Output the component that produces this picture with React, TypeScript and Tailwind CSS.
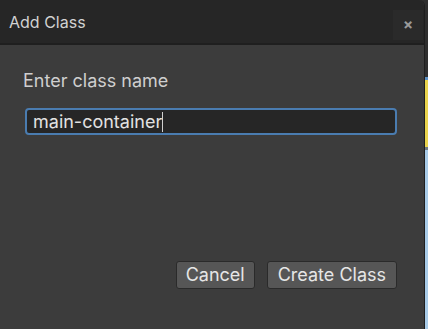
import React from 'react';

const App: React.FC = () => {
  return (
    <div
      className="flex h-[329px] w-[428px] overflow-hidden bg-[#2e2e2e]"
      style={{ fontFamily: 'Inter, "Noto Sans", sans-serif' }}
    >
      <div className="flex w-[425px] flex-col overflow-hidden rounded-tr-[6px] border-r border-[#1e1e1e] bg-[#3c3c3c]">
        <div className="flex h-[45px] shrink-0 items-center justify-between border-b-2 border-[#1f1f1f] bg-[#262626] pl-[9px] pr-[1px]">
          <span className="text-[16px] text-[#d2d2d2]">Add Class</span>
          <button className="mt-[6px] flex h-[30px] w-[30px] items-center justify-center bg-[#2a2a2a] text-[15px] font-bold leading-none text-[#9a9a9a]">
            ×
          </button>
        </div>
        <div className="flex flex-1 flex-col px-[23px] pt-[26px]">
          <label className="text-[18px] leading-[20px] text-[#cfcfcf]">Enter class name</label>
          <div className="ml-[2px] mt-[17px] flex h-[27px] w-[372px] items-center rounded-[4px] border-2 border-[#4a7cb0] bg-[#262626] pl-[6px]">
            <span className="text-[18px] leading-none text-[#e2e2e2]">main-container</span>
            <span className="h-[20px] w-px bg-[#d0d0d0]" />
          </div>
          <div className="mt-[126px] flex justify-end gap-[12px] pr-[4px]">
            <button className="h-[28px] rounded-[3px] border border-[#2a2a2a] bg-[#565656] px-[9px] text-[18px] leading-none text-[#e6e6e6]">
              Cancel
            </button>
            <button className="h-[28px] rounded-[3px] border border-[#2a2a2a] bg-[#565656] px-[10px] text-[18px] leading-none text-[#e6e6e6]">
              Create Class
            </button>
          </div>
        </div>
      </div>
      <div className="flex w-[3px] flex-col">
        <div className="h-[77px] bg-[#2e2e2e]" />
        <div className="h-[3px] bg-[#5b8fc4]" />
        <div className="h-[67px] bg-[#e9d34c]" />
        <div className="h-[3px] bg-[#6f7a84]" />
        <div className="flex-1 bg-[#a8cbe8]" />
      </div>
    </div>
  );
};

export default App;
